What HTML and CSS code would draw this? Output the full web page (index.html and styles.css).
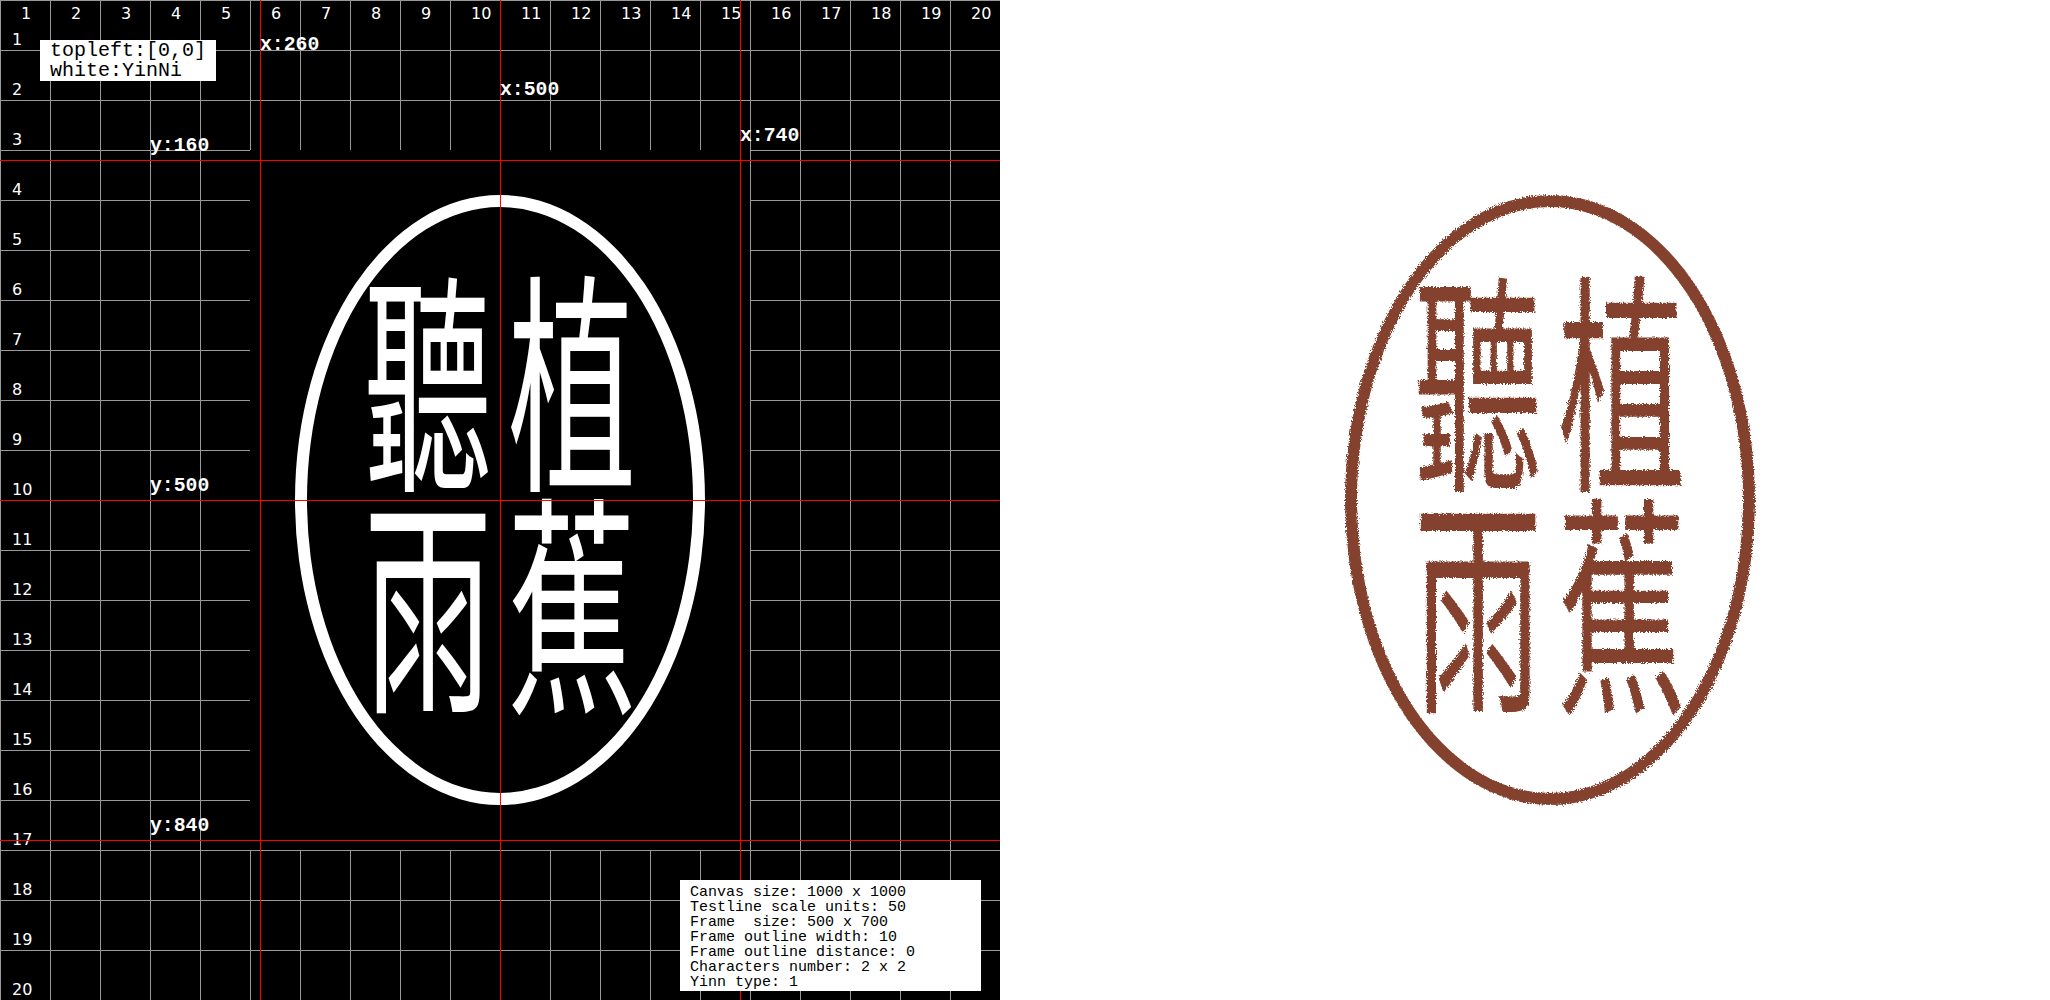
FILE: index.html
```html
<!DOCTYPE html>
<html>
	<head>
		<title>Seal</title>
		<meta charset="utf-8">
		<link rel="stylesheet" href="styles.css">
	</head>
	<body>
		<svg class="defs" width="0" height="0">
			<filter id="rough" x="-5%" y="-5%" width="110%" height="110%">
				<feTurbulence type="fractalNoise" baseFrequency="0.7" numOctaves="2" seed="4"/>
				<feDisplacementMap in="SourceGraphic" scale="5"/>
			</filter>
		</svg>
		<div class="page">
			<div class="panel test">
				<div class="nums cols">
					<span>1</span><span>2</span><span>3</span><span>4</span><span>5</span>
					<span>6</span><span>7</span><span>8</span><span>9</span><span>10</span>
					<span>11</span><span>12</span><span>13</span><span>14</span><span>15</span>
					<span>16</span><span>17</span><span>18</span><span>19</span><span>20</span>
				</div>
				<div class="nums rows">
					<span>1</span><span>2</span><span>3</span><span>4</span><span>5</span>
					<span>6</span><span>7</span><span>8</span><span>9</span><span>10</span>
					<span>11</span><span>12</span><span>13</span><span>14</span><span>15</span>
					<span>16</span><span>17</span><span>18</span><span>19</span><span>20</span>
				</div>
				<div class="frame">
					<div class="seal">
						<span>聽</span><span>植</span>
						<span>雨</span><span>蕉</span>
					</div>
				</div>
				<div class="rule v v260"></div>
				<div class="rule v v500"></div>
				<div class="rule v v740"></div>
				<div class="rule h h160"></div>
				<div class="rule h h500"></div>
				<div class="rule h h840"></div>
				<b class="tag t260">x:260</b>
				<b class="tag t500">x:500</b>
				<b class="tag t740">x:740</b>
				<b class="tag l160">y:160</b>
				<b class="tag l500">y:500</b>
				<b class="tag l840">y:840</b>
				<div class="note top">topleft:[0,0]<br>white:YinNi</div>
				<pre class="note info">Canvas size: 1000 x 1000
Testline scale units: 50
Frame  size: 500 x 700
Frame outline width: 10
Frame outline distance: 0
Characters number: 2 x 2
Yinn type: 1</pre>
			</div>
			<div class="panel stamp">
				<div class="seal">
					<span>聽</span><span>植</span>
					<span>雨</span><span>蕉</span>
				</div>
			</div>
		</div>
	</body>
</html>
```

FILE: styles.css
```css
body{
	margin:0;
	background:#fff;
}
.defs{
	position:absolute;
}
.page{
	display:flex;
	gap:50px;
	width:2050px;
	height:1000px;
	overflow:hidden;
}
.panel{
	position:relative;
	width:1000px;
	height:1000px;
}
.test{
	background-color:#000;
	background-image:linear-gradient(#999 1px,transparent 1px),linear-gradient(90deg,#999 1px,transparent 1px);
	background-size:50px 50px;
}
.stamp{
	display:flex;
	align-items:center;
	justify-content:center;
}
.nums{
	position:absolute;
	top:0;
	left:0;
	display:flex;
	color:#fff;
	font:16px/16px "DejaVu Sans",sans-serif;
}
.nums.cols span{
	width:50px;
	box-sizing:border-box;
	padding:6px 0 0 21px;
}
.nums.rows{
	flex-direction:column;
}
.nums.rows span{
	height:50px;
	box-sizing:border-box;
	padding:32px 0 0 12px;
}
.frame{
	position:absolute;
	left:250px;
	top:150px;
	width:500px;
	height:700px;
	background:#000;
	display:flex;
	align-items:center;
	justify-content:center;
}
.seal{
	width:410px;
	height:610px;
	box-sizing:border-box;
	border:12px solid #fff;
	border-radius:50%;
	padding-bottom:32px;
	color:#fff;
	display:grid;
	grid-template-columns:144px 144px;
	grid-template-rows:222px 222px;
	align-content:center;
	justify-content:center;
	font:400 128px/112px "Noto Sans CJK TC",sans-serif;
	text-align:center;
}
.seal span{
	align-self:center;
	height:112px;
	transform:scaleY(1.82);
}
.stamp .seal{
	border-color:#84432f;
	color:#84432f;
	filter:url(#rough);
}
.rule{
	position:absolute;
	background:#f00;
}
.rule.v{
	top:0;
	width:1px;
	height:1000px;
}
.rule.h{
	left:0;
	width:1000px;
	height:1px;
}
.v260{left:260px;}
.v500{left:500px;}
.v740{left:740px;}
.h160{top:160px;}
.h500{top:500px;}
.h840{top:840px;}
.tag{
	position:absolute;
	color:#fff;
	font:bold 19.8px/20px "Liberation Mono",monospace;
}
.t260{left:260px;top:35px;}
.t500{left:500px;top:80px;}
.t740{left:740px;top:126px;}
.l160{left:150px;top:136px;}
.l500{left:150px;top:476px;}
.l840{left:150px;top:816px;}
.note{
	position:absolute;
	margin:0;
	background:#fff;
	color:#000;
	font-family:"Liberation Mono",monospace;
}
.note.top{
	left:40px;
	top:40px;
	width:176px;
	height:41px;
	box-sizing:border-box;
	padding:1px 0 0 10px;
	font-size:20px;
	line-height:20px;
}
.note.info{
	left:680px;
	top:880px;
	width:301px;
	height:111px;
	box-sizing:border-box;
	padding:5px 0 0 10px;
	font-size:15px;
	line-height:15px;
}
```
